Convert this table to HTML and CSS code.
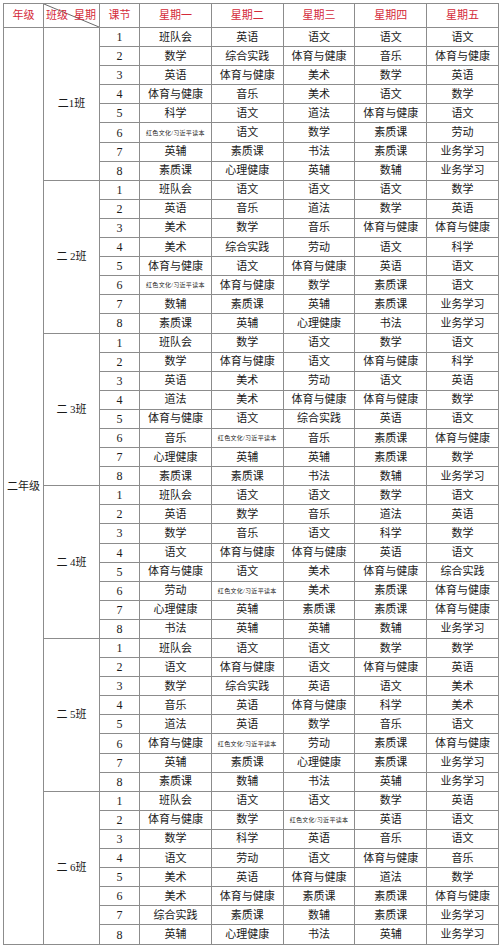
FILE: index.html
```html
<!DOCTYPE html>
<html lang="zh">
<head>
<meta charset="utf-8">
<title>二年级课程表</title>
<link rel="stylesheet" href="styles.css">
</head>
<body>
<table class="tt">
<colgroup>
<col class="c-grade"><col class="c-class"><col class="c-no">
<col class="c-day"><col class="c-day"><col class="c-day"><col class="c-day"><col class="c-day">
</colgroup>
<thead>
<tr class="head">
<th>年级</th>
<th class="diag"><svg class="diag-line" viewBox="0 0 100 100" preserveAspectRatio="none"><line x1="0" y1="0" x2="100" y2="100" vector-effect="non-scaling-stroke"/></svg><span class="diag-text"><span>班级</span><span>星期</span></span></th>
<th>课节</th><th>星期一</th><th>星期二</th><th>星期三</th><th>星期四</th><th>星期五</th>
</tr>
</thead>
<tbody id="body">
<tr><td class="grade" rowspan="48">二年级</td><td class="cls" rowspan="8">二1班</td><td class="no">1</td><td>班队会</td><td>英语</td><td>语文</td><td>语文</td><td>语文</td></tr>
<tr><td class="no">2</td><td>数学</td><td>综合实践</td><td>体育与健康</td><td>音乐</td><td>体育与健康</td></tr>
<tr><td class="no">3</td><td>英语</td><td>体育与健康</td><td>美术</td><td>数学</td><td>英语</td></tr>
<tr><td class="no">4</td><td>体育与健康</td><td>音乐</td><td>美术</td><td>语文</td><td>数学</td></tr>
<tr><td class="no">5</td><td>科学</td><td>语文</td><td>道法</td><td>体育与健康</td><td>语文</td></tr>
<tr><td class="no">6</td><td class="sm">红色文化/习近平读本</td><td>语文</td><td>数学</td><td>素质课</td><td>劳动</td></tr>
<tr><td class="no">7</td><td>英辅</td><td>素质课</td><td>书法</td><td>素质课</td><td>业务学习</td></tr>
<tr><td class="no">8</td><td>素质课</td><td>心理健康</td><td>英辅</td><td>数辅</td><td>业务学习</td></tr>

<tr><td class="cls" rowspan="8">二 2班</td><td class="no">1</td><td>班队会</td><td>语文</td><td>语文</td><td>语文</td><td>数学</td></tr>
<tr><td class="no">2</td><td>英语</td><td>音乐</td><td>道法</td><td>数学</td><td>英语</td></tr>
<tr><td class="no">3</td><td>美术</td><td>数学</td><td>音乐</td><td>体育与健康</td><td>体育与健康</td></tr>
<tr><td class="no">4</td><td>美术</td><td>综合实践</td><td>劳动</td><td>语文</td><td>科学</td></tr>
<tr><td class="no">5</td><td>体育与健康</td><td>语文</td><td>体育与健康</td><td>英语</td><td>语文</td></tr>
<tr><td class="no">6</td><td class="sm">红色文化/习近平读本</td><td>体育与健康</td><td>数学</td><td>素质课</td><td>语文</td></tr>
<tr><td class="no">7</td><td>数辅</td><td>素质课</td><td>英辅</td><td>素质课</td><td>业务学习</td></tr>
<tr><td class="no">8</td><td>素质课</td><td>英辅</td><td>心理健康</td><td>书法</td><td>业务学习</td></tr>

<tr><td class="cls" rowspan="8">二 3班</td><td class="no">1</td><td>班队会</td><td>数学</td><td>语文</td><td>数学</td><td>语文</td></tr>
<tr><td class="no">2</td><td>数学</td><td>体育与健康</td><td>语文</td><td>体育与健康</td><td>科学</td></tr>
<tr><td class="no">3</td><td>英语</td><td>美术</td><td>劳动</td><td>语文</td><td>英语</td></tr>
<tr><td class="no">4</td><td>道法</td><td>美术</td><td>体育与健康</td><td>体育与健康</td><td>数学</td></tr>
<tr><td class="no">5</td><td>体育与健康</td><td>语文</td><td>综合实践</td><td>英语</td><td>语文</td></tr>
<tr><td class="no">6</td><td>音乐</td><td class="sm">红色文化/习近平读本</td><td>音乐</td><td>素质课</td><td>体育与健康</td></tr>
<tr><td class="no">7</td><td>心理健康</td><td>英辅</td><td>英辅</td><td>素质课</td><td>数学</td></tr>
<tr><td class="no">8</td><td>素质课</td><td>素质课</td><td>书法</td><td>数辅</td><td>业务学习</td></tr>

<tr><td class="cls" rowspan="8">二 4班</td><td class="no">1</td><td>班队会</td><td>语文</td><td>语文</td><td>数学</td><td>语文</td></tr>
<tr><td class="no">2</td><td>英语</td><td>数学</td><td>音乐</td><td>道法</td><td>英语</td></tr>
<tr><td class="no">3</td><td>数学</td><td>音乐</td><td>语文</td><td>科学</td><td>数学</td></tr>
<tr><td class="no">4</td><td>语文</td><td>体育与健康</td><td>体育与健康</td><td>英语</td><td>语文</td></tr>
<tr><td class="no">5</td><td>体育与健康</td><td>语文</td><td>美术</td><td>体育与健康</td><td>综合实践</td></tr>
<tr><td class="no">6</td><td>劳动</td><td class="sm">红色文化/习近平读本</td><td>美术</td><td>素质课</td><td>体育与健康</td></tr>
<tr><td class="no">7</td><td>心理健康</td><td>英辅</td><td>素质课</td><td>素质课</td><td>体育与健康</td></tr>
<tr><td class="no">8</td><td>书法</td><td>英辅</td><td>英辅</td><td>数辅</td><td>业务学习</td></tr>

<tr><td class="cls" rowspan="8">二 5班</td><td class="no">1</td><td>班队会</td><td>语文</td><td>语文</td><td>数学</td><td>数学</td></tr>
<tr><td class="no">2</td><td>语文</td><td>体育与健康</td><td>语文</td><td>体育与健康</td><td>英语</td></tr>
<tr><td class="no">3</td><td>数学</td><td>综合实践</td><td>英语</td><td>语文</td><td>美术</td></tr>
<tr><td class="no">4</td><td>音乐</td><td>英语</td><td>体育与健康</td><td>科学</td><td>美术</td></tr>
<tr><td class="no">5</td><td>道法</td><td>英语</td><td>数学</td><td>音乐</td><td>语文</td></tr>
<tr><td class="no">6</td><td>体育与健康</td><td class="sm">红色文化/习近平读本</td><td>劳动</td><td>素质课</td><td>体育与健康</td></tr>
<tr><td class="no">7</td><td>英辅</td><td>素质课</td><td>心理健康</td><td>素质课</td><td>业务学习</td></tr>
<tr><td class="no">8</td><td>素质课</td><td>数辅</td><td>书法</td><td>英辅</td><td>业务学习</td></tr>

<tr><td class="cls" rowspan="8">二 6班</td><td class="no">1</td><td>班队会</td><td>语文</td><td>语文</td><td>数学</td><td>英语</td></tr>
<tr><td class="no">2</td><td>体育与健康</td><td>数学</td><td class="sm">红色文化/习近平读本</td><td>英语</td><td>语文</td></tr>
<tr><td class="no">3</td><td>数学</td><td>科学</td><td>英语</td><td>音乐</td><td>语文</td></tr>
<tr><td class="no">4</td><td>语文</td><td>劳动</td><td>语文</td><td>体育与健康</td><td>音乐</td></tr>
<tr><td class="no">5</td><td>美术</td><td>英语</td><td>体育与健康</td><td>道法</td><td>数学</td></tr>
<tr><td class="no">6</td><td>美术</td><td>体育与健康</td><td>素质课</td><td>素质课</td><td>体育与健康</td></tr>
<tr><td class="no">7</td><td>综合实践</td><td>素质课</td><td>数辅</td><td>素质课</td><td>业务学习</td></tr>
<tr><td class="no">8</td><td>英辅</td><td>心理健康</td><td>书法</td><td>英辅</td><td>业务学习</td></tr>
</tbody>
</table>
</body>
</html>
```
FILE: styles.css
```css
html, body {
  margin: 0;
  padding: 0;
  background: #ffffff;
}
body {
  padding: 3px 0 0 3px;
  font-family: "Liberation Serif", "Noto Sans CJK SC", serif;
  color: #1a1a1a;
}
.tt {
  border-collapse: collapse;
  table-layout: fixed;
  width: 495px;
  height: 942px;
  font-size: 11px;
}
.c-grade { width: 40px; }
.c-class { width: 56px; }
.c-no { width: 40px; }
.c-day { width: 71.8px; }
.tt th, .tt td {
  border: 1px solid #8c8c8c;
  padding: 0;
  text-align: center;
  vertical-align: middle;
  line-height: 1;
  white-space: nowrap;
  overflow: hidden;
}
.head th {
  height: 23px;
  color: #d42a3a;
  font-weight: normal;
  font-size: 11px;
}
.tt td {
  height: 18px;
}
.no {
  font-family: "Liberation Serif", serif;
  font-size: 12px;
}
.sm {
  font-size: 6px;
  letter-spacing: 0.3px;
}
.grade, .cls {
  font-size: 11px;
}
.diag {
  position: relative;
}
.diag-line {
  position: absolute;
  left: 0;
  top: 0;
  width: 100%;
  height: 100%;
}
.diag-line line {
  stroke: #6a6a6a;
  stroke-width: 1;
}
.diag-text {
  position: relative;
  display: flex;
  justify-content: space-between;
  padding: 0 3px 0 2px;
}
```
